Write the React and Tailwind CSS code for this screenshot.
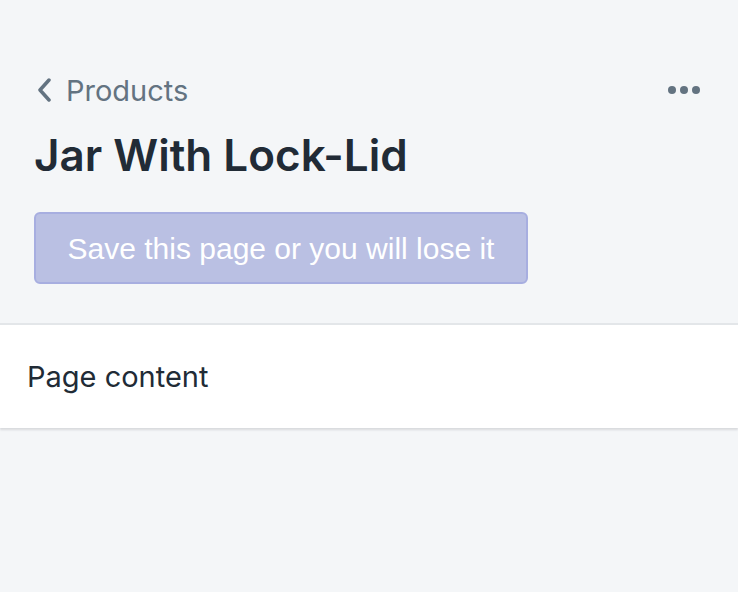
export default function App() {
  return (
    <div className="min-h-screen bg-[#f4f6f8] font-['Inter',sans-serif]">
      <div className="pt-[70px] pl-[34px] pr-[38px]">
        <div className="flex items-center justify-between h-[40px]">
          <div className="flex items-center gap-[14px] text-[#637381]">
            <svg width="16" height="24" viewBox="0 0 16 24" className="ml-[2px]">
              <path d="M13 2 L4 12 L13 22" fill="none" stroke="#637381" strokeWidth="3.5" strokeLinecap="round" strokeLinejoin="round" />
            </svg>
            <span className="text-[29px] leading-none">Products</span>
          </div>
          <div className="flex gap-[4px]">
            <span className="w-[8px] h-[8px] rounded-full bg-[#637381]" />
            <span className="w-[8px] h-[8px] rounded-full bg-[#637381]" />
            <span className="w-[8px] h-[8px] rounded-full bg-[#637381]" />
          </div>
        </div>
        <h1 className="mt-[17px] text-[44px] font-semibold leading-[56px] text-[#212b36]">Jar With Lock-Lid</h1>
        <div className="mt-[29px] w-[494px] h-[72px] flex items-center justify-center rounded-[6px] border-2 border-[#a7aee0] bg-[#bac0e3] text-white text-[30px] font-['Liberation_Sans',sans-serif]">
          Save this page or you will lose it
        </div>
      </div>
      <div className="mt-[39px] bg-white border-t-2 border-[#e3e6e9] shadow-[0_2px_2px_rgba(63,63,68,0.15)] h-[105px] flex items-center pl-[27px]">
        <span className="text-[29px] text-[#212b36]">Page content</span>
      </div>
    </div>
  );
}
